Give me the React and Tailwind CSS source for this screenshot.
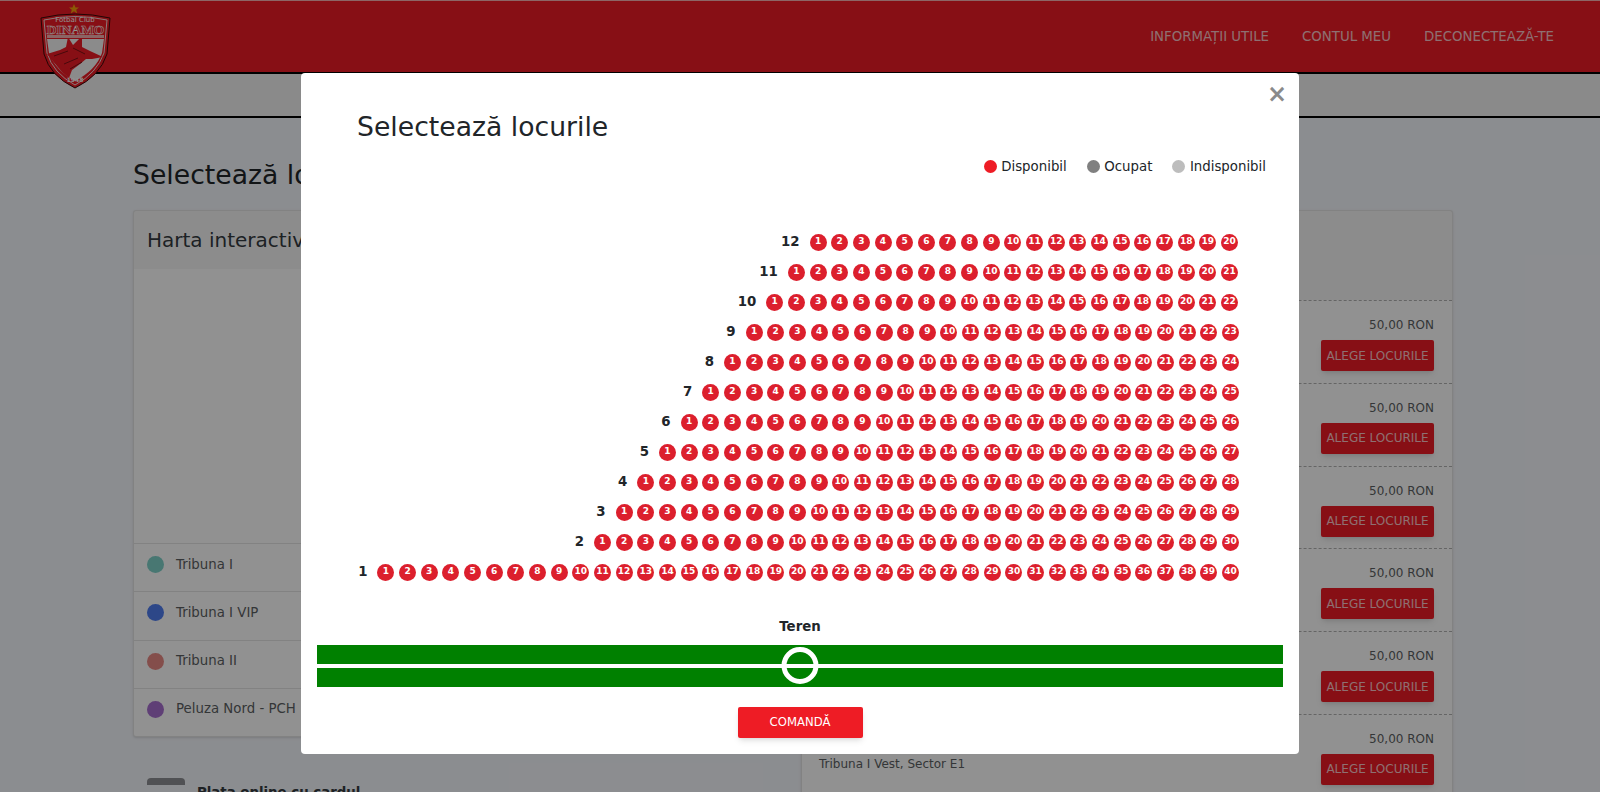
// Seat picker modal over the ticket page
const SEAT_ROWS = [
  { row: 12, seats: 20 },
  { row: 11, seats: 21 },
  { row: 10, seats: 22 },
  { row: 9, seats: 23 },
  { row: 8, seats: 24 },
  { row: 7, seats: 25 },
  { row: 6, seats: 26 },
  { row: 5, seats: 27 },
  { row: 4, seats: 28 },
  { row: 3, seats: 29 },
  { row: 2, seats: 30 },
  { row: 1, seats: 40 },
];

const STANDS = [
  { name: "Tribuna I", dot: "bg-[#7fd1c9]" },
  { name: "Tribuna I VIP", dot: "bg-[#4f7df0]" },
  { name: "Tribuna II", dot: "bg-[#e88a85]" },
  { name: "Peluza Nord - PCH", dot: "bg-[#a86fd0]" },
];

const SECTORS = ["A1", "B1", "C1", "D1", "E1", "E1"];

function Logo() {
  return (
    <svg
      className="absolute left-[40px] top-[4px] w-[71px] h-[85px]"
      viewBox="0 0 71 85"
    >
      <polygon
        points="34,0 35.5,3.5 39,3.5 36.2,5.8 37.2,9.5 34,7.3 30.8,9.5 31.8,5.8 29,3.5 32.5,3.5"
        fill="#f59e0b"
      />
      <path
        d="M1 14 Q35 6 70 14 L67 50 Q60 72 35 84 Q10 72 4 50 Z"
        fill="#ee1c25"
        stroke="#3b0a0a"
        strokeWidth="1"
      />
      <path
        d="M4 16 Q35 9 67 16 L64 49 Q57 69 35 81 Q13 69 7 49 Z"
        fill="none"
        stroke="#f3d6d6"
        strokeWidth="1"
      />
      {/* light panel behind the wolf */}
      <path d="M7 35 L64 35 L62 49 Q56 66 35 77 Q15 66 9 49 Z" fill="#f4f4f4" />
      {/* wolf head */}
      <path
        d="M7 50 L20 46 L26 43 L28 33 L33 41 L42 32 L42 43 L50 47 L63 53 L52 55 L46 55 L40 60 L32 66 L29 74 L22 68 L11 55 Z"
        fill="#ee1c25"
      />
      <path
        d="M14 52 L28 47 M33 44 L45 50 M24 60 L38 54 M30 65 L42 58"
        stroke="#7f1015"
        strokeWidth="1"
        fill="none"
      />
      <text x="35" y="18" textAnchor="middle" fontSize="7" fill="#ffffff">
        Fotbal Club
      </text>
      <text
        x="35.5"
        y="30"
        textAnchor="middle"
        fontSize="13.5"
        fill="#ee1c25"
        fontWeight="bold"
        fontFamily="Liberation Serif, serif"
        stroke="#ffffff"
        strokeWidth="0.5"
      >
        DINAMO
      </text>
      <rect x="7" y="31" width="57" height="3" fill="#f4b0b0" />
      <text
        x="35"
        y="78"
        textAnchor="middle"
        fontSize="6"
        fill="#ffffff"
        fontWeight="bold"
      >
        1948
      </text>
    </svg>
  );
}

function BackgroundPage() {
  return (
    <>
      <header className="relative h-[74px] pt-[1px] bg-[#ee1c25] border-t border-t-[#f8b4b4] border-b-2 border-b-black flex items-center justify-end gap-[33px] pr-[46px] text-[13.33px] text-white/75">
        <a>INFORMAȚII UTILE</a>
        <a>CONTUL MEU</a>
        <a>DECONECTEAZĂ-TE</a>
      </header>
      <div className="h-[44px] bg-[#f2f2f2] border-b-2 border-b-black" />

      <main className="ml-[133px] w-[1320px]">
        <h3 className="text-[26.67px] leading-[34px] mt-[40px] text-[#212529]">
          Selectează locurile
        </h3>
        <div className="flex gap-[16px] mt-[18px] items-start">
          <div className="w-[652px]">
            <section className="bg-white border border-black/10 rounded-[3px] shadow-sm">
              <h5 className="h-[58px] flex items-center px-[13px] text-xl text-[#343a40] bg-black/[.03]">
                Harta interactivă
              </h5>
              <div className="h-[274px]" />
              {STANDS.map((stand) => (
                <div
                  key={stand.name}
                  className="h-[48.25px] pb-[6px] flex items-center gap-[12px] px-[13px] border-t border-black/10 text-[13.33px] text-[#5c5f63]"
                >
                  <span className={`w-[17px] h-[17px] rounded-full ${stand.dot}`} />
                  {stand.name}
                </div>
              ))}
            </section>
            <div className="flex gap-[12px] mt-[41px] pl-[14px]">
              {/* only the dark top of the card icon is inside the window */}
              <span className="w-[38px] h-[7px] rounded-t-[4px] bg-[#8e8f94]" />
              <b className="text-[13.33px] text-[#343a40] mt-[5px]">Plata online cu cardul</b>
            </div>
          </div>

          <section className="w-[652px] bg-white border border-black/10 rounded-[3px] shadow-sm">
            <div className="h-[89px] bg-black/[.03]" />
            {SECTORS.map((sector, i) => (
              <div
                key={i}
                className="h-[82.8px] flex items-start justify-between pl-[17px] pr-[18px] border-t border-dashed border-black/30"
              >
                <span className="text-xs text-[#5c5f63] mt-[41px]">
                  Tribuna I Vest, Sector {sector}
                </span>
                <div className="flex flex-col items-end gap-[7px] pt-[16px] text-xs text-[#5c5f63]">
                  <span>50,00 RON</span>
                  <button className="h-[31px] w-[113px] bg-[#ee1c25] text-white/75 rounded-[2px] shadow-md">
                    ALEGE LOCURILE
                  </button>
                </div>
              </div>
            ))}
          </section>
        </div>
      </main>
    </>
  );
}

function LegendItem({ color, label }) {
  return (
    <div className="flex items-center gap-[4.5px]">
      <span className={`w-[13px] h-[13px] rounded-full ${color}`} />
      {label}
    </div>
  );
}

function SeatModal() {
  return (
    <div className="absolute left-[301px] top-[73px] w-[998px] h-[681px] bg-white rounded-[4px] text-[#212529]">
      <button className="absolute right-[12px] top-[9px] text-[24px] leading-[24px] font-bold text-[#8a8a8a]">
        ×
      </button>

      <h3 className="text-[26.67px] leading-[34px] pt-[37px] pl-[56px] box-content">
        Selectează locurile
      </h3>

      <div className="flex justify-end gap-[20px] mt-[12px] pr-[33px] text-[13.33px] leading-[21px]">
        <LegendItem color="bg-[#ee1c25]" label="Disponibil" />
        <LegendItem color="bg-[#808080]" label="Ocupat" />
        <LegendItem color="bg-[#bdbdbd]" label="Indisponibil" />
      </div>

      <div className="mt-[50px] pr-[60px]">
        {SEAT_ROWS.map(({ row, seats }) => (
          <div
            key={row}
            className={
              row > 9
                ? "h-[30px] flex items-center justify-end pr-[1px]"
                : "h-[30px] flex items-center justify-end"
            }
          >
            <span className="mr-[10px] text-[13.33px] font-bold">{row}</span>
            <div className="flex gap-[4.67px]">
              {Array.from({ length: seats }, (_, i) => (
                <span
                  key={i}
                  className="w-[17px] h-[17px] rounded-full bg-[#dc1f2d] text-white text-[9px] font-bold flex items-center justify-center"
                >
                  {i + 1}
                </span>
              ))}
            </div>
          </div>
        ))}
      </div>

      <div className="mt-[31px] text-center text-[13.33px] leading-[17px] font-bold">
        Teren
      </div>
      <div className="relative mx-[16px] mt-[10px] h-[42px] bg-[#008000]">
        <div className="absolute left-0 right-0 top-[19px] h-[4px] bg-white" />
        <div className="absolute left-1/2 top-[2px] -translate-x-1/2 w-[37px] h-[37px] rounded-full border-[5px] border-white" />
      </div>

      <div className="flex justify-center mt-[20px]">
        <button className="w-[125px] h-[30.5px] bg-[#ee1c25] text-white text-[11.67px] rounded-[2px] shadow-md">
          COMANDĂ
        </button>
      </div>
    </div>
  );
}

export default function App() {
  return (
    <div className="relative w-[1600px] h-[792px] overflow-hidden bg-[#f5f8fd] font-['DejaVu_Sans',sans-serif]">
      <BackgroundPage />
      <Logo />
      <div className="absolute inset-0 bg-black/[.43]" />
      <SeatModal />
    </div>
  );
}
